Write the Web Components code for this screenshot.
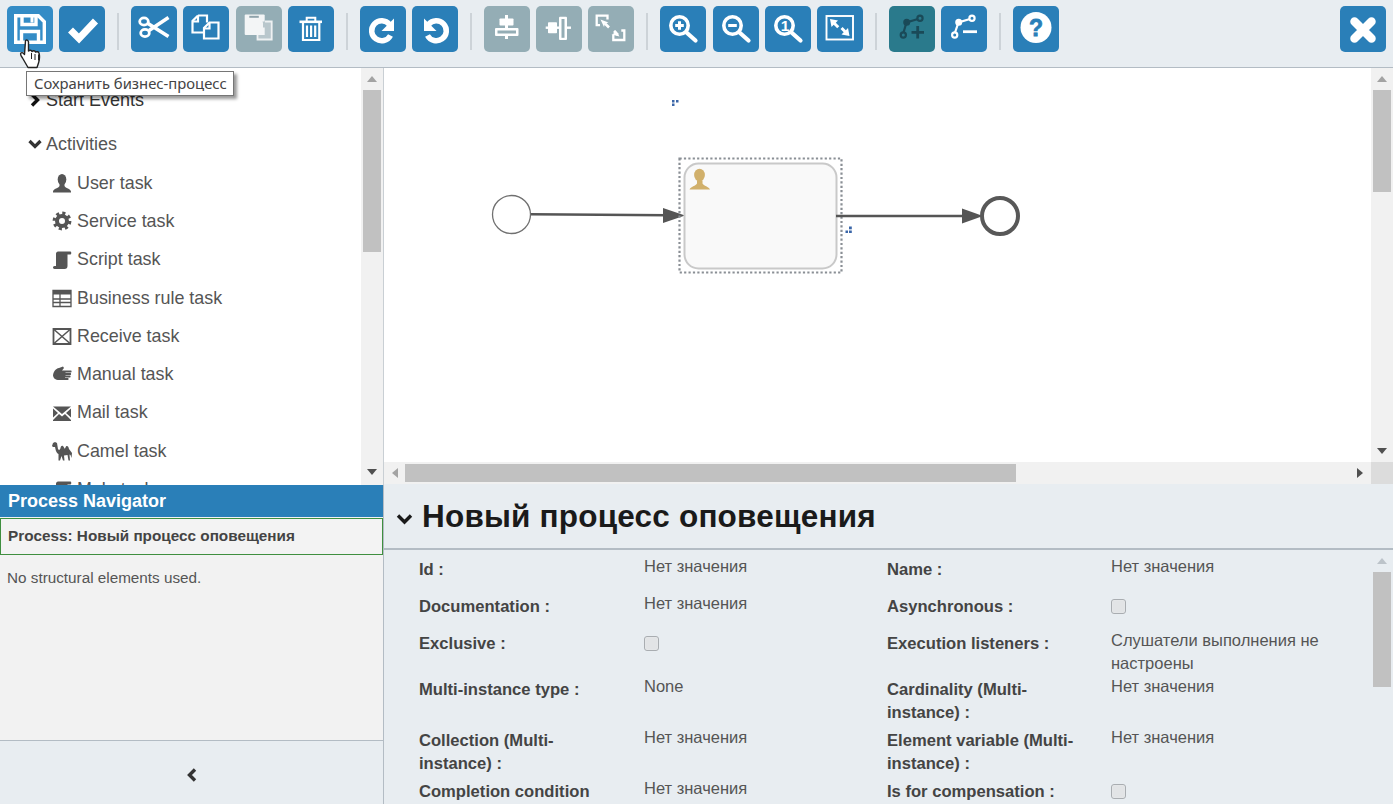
<!DOCTYPE html>
<html lang="ru"><head><meta charset="utf-8"><title>Process editor</title>
<style>
html,body{margin:0;padding:0;background:#fff;font-family:"Liberation Sans",Arial,sans-serif;overflow:hidden}
</style></head><body>
<app-shell>
  <app-toolbar slot="top">
    <tool-btn icon="save" tone="hover"></tool-btn><tool-btn icon="check"></tool-btn><tool-sep></tool-sep>
    <tool-btn icon="cut"></tool-btn><tool-btn icon="copy"></tool-btn><tool-btn icon="paste" tone="off"></tool-btn><tool-btn icon="trash"></tool-btn><tool-sep></tool-sep>
    <tool-btn icon="redo"></tool-btn><tool-btn icon="undo"></tool-btn><tool-sep></tool-sep>
    <tool-btn icon="alignh" tone="off"></tool-btn><tool-btn icon="alignv" tone="off"></tool-btn><tool-btn icon="samesize" tone="off"></tool-btn><tool-sep></tool-sep>
    <tool-btn icon="zoomin"></tool-btn><tool-btn icon="zoomout"></tool-btn><tool-btn icon="zoom1"></tool-btn><tool-btn icon="fit"></tool-btn><tool-sep></tool-sep>
    <tool-btn icon="addpt" tone="active"></tool-btn><tool-btn icon="rempt"></tool-btn><tool-sep></tool-sep>
    <tool-btn icon="help"></tool-btn>
    <tool-btn icon="close" class="end"></tool-btn>
  </app-toolbar>
  <shape-palette slot="left">
    <palette-group>Start Events</palette-group>
    <palette-group open>Activities</palette-group>
    <palette-item icon="user">User task</palette-item>
    <palette-item icon="gear">Service task</palette-item>
    <palette-item icon="script">Script task</palette-item>
    <palette-item icon="table">Business rule task</palette-item>
    <palette-item icon="receive">Receive task</palette-item>
    <palette-item icon="hand">Manual task</palette-item>
    <palette-item icon="mail">Mail task</palette-item>
    <palette-item icon="camel">Camel task</palette-item>
    <palette-item icon="script">Mule task</palette-item>
  </shape-palette>
  <process-navigator slot="left"></process-navigator>
  <process-canvas slot="right"></process-canvas>
  <property-panel slot="right" heading="Новый процесс оповещения">
    <prop-label>Id :</prop-label><prop-value>Нет значения</prop-value><prop-label>Name :</prop-label><prop-value>Нет значения</prop-value>
    <prop-label>Documentation :</prop-label><prop-value>Нет значения</prop-value><prop-label>Asynchronous :</prop-label><prop-check></prop-check>
    <prop-label>Exclusive :</prop-label><prop-check></prop-check><prop-label>Execution listeners :</prop-label><prop-value>Слушатели выполнения не настроены</prop-value>
    <prop-label>Multi-instance type :</prop-label><prop-value>None</prop-value><prop-label>Cardinality (Multi-instance) :</prop-label><prop-value>Нет значения</prop-value>
    <prop-label>Collection (Multi-instance) :</prop-label><prop-value>Нет значения</prop-value><prop-label>Element variable (Multi-instance) :</prop-label><prop-value>Нет значения</prop-value>
    <prop-label>Completion condition</prop-label><prop-value>Нет значения</prop-value><prop-label>Is for compensation :</prop-label><prop-check></prop-check>
  </property-panel>
  <hover-tip slot="over" text="Сохранить бизнес-процесс"></hover-tip>
</app-shell>
<script>
const OFF='#94adb5';
const TOOL_ICONS={
save:'<g fill="none" stroke="#fff" stroke-width="3.4"><path d="M8.7 9.7h22.6l6 6v20.6H8.7z"/><path d="M15 10v8.5h14V10"/><path d="M14.5 36V25.5h17V36"/></g><rect x="23.5" y="11" width="3" height="5.5" fill="#fff"/>',
check:'<path d="M11.5 24l8.500 8.500L36.500 15" fill="none" stroke="#fff" stroke-width="7"/>',
cut:'<g fill="none" stroke="#fff"><ellipse cx="13" cy="15.500" rx="4.300" ry="3.600" stroke-width="2.800"/><ellipse cx="14" cy="27" rx="4.300" ry="3.600" stroke-width="2.800"/><path d="M17 17.500L37.500 30.500M18 24.500L37.500 11.500" stroke-width="3.600"/></g>',
copy:'<g fill="none" stroke="#fff" stroke-width="2.200"><path d="M15 9.500h9v7M15 9.500l-5.500 5.500v11.500H20"/><path d="M15 10v5.500H10"/><path d="M26.500 16.500h9v16H21V22z"/><path d="M26.500 17v5.500H21.500"/></g>',
paste:'<rect x="8.700" y="8.500" width="20" height="20.500" rx="1" fill="#f3f5f6"/><rect x="13.300" y="9.800" width="9.500" height="2" fill="#8fa3ab"/><path d="M26.500 15.500h9.200v18H21.500V29H27V17z" fill="#b9c7cc"/><path d="M29 15.500h6.700v18H21.500V29" fill="none" stroke="#eef1f2" stroke-width="1.800"/><path d="M26.500 21.500h2.200V29H21.500v-2.500z" fill="#f3f5f6"/>',
trash:'<g fill="none" stroke="#fff"><path d="M11.500 15.800h22.500" stroke-width="2.600"/><path d="M18.700 15v-3.300h8.600V15" stroke-width="2"/><path d="M15 17v17h16.300V17" stroke-width="2.200"/><path d="M19 19.500V31M23.100 19.500V31M27.200 19.500V31" stroke-width="2.200"/></g>',
redo:'<path d="M29.500 18.500a10 10 0 1 0 1 11" fill="none" stroke="#fff" stroke-width="5.500"/><path d="M34 12.500V25H21.500z" fill="#fff"/>',
undo:'<path d="M16.500 18.500a10 10 0 1 1 -1 11" fill="none" stroke="#fff" stroke-width="5.500"/><path d="M12 12.500V25h12.500z" fill="#fff"/>',
alignh:'<g fill="#fff"><rect x="15.500" y="12.500" width="14" height="7" rx=".8"/><rect x="21" y="9" width="3" height="24"/><rect x="11" y="22" width="23.500" height="8" rx="1"/></g><rect x="13.500" y="24.500" width="18.500" height="3" fill="#94adb5"/>',
alignv:'<g fill="#fff"><rect x="12" y="16.300" width="9" height="11" rx=".8"/><rect x="9.700" y="20.500" width="25.300" height="2.400"/><rect x="23" y="10.700" width="8" height="23.300" rx="1"/></g><rect x="25.500" y="13" width="3" height="18.800" fill="#94adb5"/>',
samesize:'<g fill="none" stroke="#fff" stroke-width="2.300"><path d="M19.500 13.500V9.700H8.700v9.500h3.300"/><path d="M25.300 29v5h11V24.500h-3"/><path d="M17 17.500l4 4M26 25l4 4" stroke-width="2.600"/></g><path d="M12.500 13.500l8 3-3.500 1-1 3.500zM31.500 30.500l-8-2 3-1.500 1-3z" fill="#fff"/>',
zoomin:'<g fill="none" stroke="#fff"><circle cx="19.500" cy="19.500" r="8.700" stroke-width="3.600"/><path d="M26.500 26.500L35.500 34.500" stroke-width="4.200" stroke-linecap="round"/><path d="M15.200 19.500h8.600M19.500 15.200v8.600" stroke-width="3"/></g>',
zoomout:'<g fill="none" stroke="#fff"><circle cx="19.500" cy="19.500" r="8.700" stroke-width="3.600"/><path d="M26.500 26.500L35.500 34.500" stroke-width="4.200" stroke-linecap="round"/><path d="M15.200 19.500h8.600" stroke-width="3"/></g>',
zoom1:'<g fill="none" stroke="#fff"><circle cx="19.500" cy="19.500" r="8.700" stroke-width="3.600"/><path d="M26.500 26.500L35.500 34.500" stroke-width="4.200" stroke-linecap="round"/></g><text x="20" y="25" text-anchor="middle" font-family="Liberation Sans" font-weight="700" font-size="15.500" fill="#fff">1</text>',
fit:'<rect x="9.500" y="10" width="26.500" height="23.500" fill="none" stroke="#fff" stroke-width="1.900"/><g fill="#fff"><path d="M13 13l8 1.500-2.200 2.200 3.500 3.500-2.100 2-3.500-3.500L14.500 21z"/><path d="M32.500 30l-8-1.500 2.200-2.200-3.200-3.200 2.100-2 3.200 3.200L31 22z"/></g>',
addpt:'<g fill="none" stroke="#1a4a58" stroke-width="2.200"><path d="M14.500 26.500L17.500 16.500 29 13"/><circle cx="14.300" cy="29" r="2.600"/><circle cx="17.700" cy="16.300" r="2.400" fill="#1a4a58"/><circle cx="31" cy="12.300" r="2.600"/><path d="M22.500 26.300h12.500M28.700 20v12.500" stroke-width="2.800"/></g>',
rempt:'<g fill="none" stroke="#fff" stroke-width="2.200"><path d="M14 26.500L17.500 16.500 29 13"/><circle cx="13.700" cy="29" r="2.600"/><circle cx="17.700" cy="16.300" r="2.400" fill="#fff"/><circle cx="31" cy="12.300" r="2.600"/><path d="M22 25.700h14" stroke-width="2.800"/></g>',
help:'<circle cx="23" cy="21.500" r="15.500" fill="#fff"/><text x="23" y="29.500" text-anchor="middle" font-family="Liberation Sans" font-weight="700" font-size="23" fill="#2a7fb8" stroke="#2a7fb8" stroke-width=".8">?</text>',
close:'<path d="M14.500 15.500l17 17M31.500 15.500l-17 17" fill="none" stroke="#fff" stroke-width="8.500" stroke-linecap="round"/>'
};
const PAL_ICONS={
user:'<ellipse cx="10" cy="6.500" rx="4.300" ry="5.500"/><path d="M1 19.500v-1c.5-3 5.500-3 6.500-5.500V11h5v2c1 2.500 6 2.500 6.500 5.500v1z"/>',
gear:'<circle cx="10" cy="10" r="5" fill="none" stroke="#555" stroke-width="4"/><circle cx="10" cy="10" r="7.800" fill="none" stroke="#555" stroke-width="3.200" stroke-dasharray="3.100 3.030"/>',
script:'<path d="M6 1.500h12.500c1 0 1 3 0 3h-3V16c0 2-1 3-3 3h-10c-2 0-2-3 0-3H4V3.500c0-1 1-2 2-2z"/>',
table:'<path d="M1 2.500h18v16H1z" fill="none" stroke="#555" stroke-width="1.300"/><path d="M1 2.500h18v4H1z"/><path d="M1 11h18M1 14.500h18M8 6v12.500" stroke="#555" stroke-width="1.300" fill="none"/>',
receive:'<path d="M1.500 3h17v15h-17z" fill="none" stroke="#555" stroke-width="1.800"/><path d="M2 3.500l16 14M18 3.500l-16 14" fill="none" stroke="#555" stroke-width="1.500"/>',
hand:'<path d="M1 11.500C1 7 3.500 3.500 7 3l4-1.500 1 1.500-2 2.500h9c.8 0 .8 2 0 2h-5.500v.5h5c.8 0 .8 2 0 2h-5v.5h4.500c.8 0 .8 2 0 2H13v.5h3c.8 0 .8 2 0 2H7c-3.500 0-6-2-6-5z"/>',
mail:'<path d="M1 3.500h18L10 11zM1 5.500l5 4.500-5 4.500zM19 5.500L14 10l5 4.500zM7 11l3 2.500 3-2.500 6 6v1H1v-1z"/>',
camel:'<path d="M0 5l1-3 2-1 2 1 1 6c1 1.500 2 1 2.500-1 .5-3 2.500-3 3.500-.5.500 1.500 1 1.500 1.500 0 1-2.500 3-1.500 3.500 1.500l3 4-.5 5-1-3-1-.5.500 6h-1.500l-1-5.500-3.500.5.500 5H11l-1.500-4.500L8 19.500H6.500V13C4 12 3.500 8 3 6L1 6z"/>'
};
function def(name,css,html){
  customElements.define(name,class extends HTMLElement{
    connectedCallback(){
      if(this.shadowRoot)return;
      const r=this.attachShadow({mode:'open'});
      r.innerHTML='<style>'+css+'</style>'+(typeof html==='function'?html(this):html);
    }
  });
}
def('app-shell',`
:host{display:grid;grid-template-columns:384px 1009px;grid-template-rows:68px 736px;width:1393px;height:804px;position:relative;background:#e8edf1;color:#555}
.top{grid-column:1/3;display:block}
.col{display:flex;flex-direction:column;min-height:0;overflow:hidden}
`,`<div class="top"><slot name="top"></slot></div><div class="col"><slot name="left"></slot></div><div class="col"><slot name="right"></slot></div><slot name="over"></slot>`);
def('app-toolbar',`
:host{display:flex;align-items:flex-start;gap:6.33px;padding:6px 7px 0;box-sizing:border-box;height:68px;border-bottom:1px solid #b3bcc4;background:#e8edf1}
`,`<slot></slot>`);
def('tool-sep',`:host{display:block;width:2px;height:37px;margin:7px 5.54px 0;background:#cdd3d8}`,``);
def('tool-btn',`
:host{display:block;width:46px;height:46px;flex:none;border-radius:5px;background:#2a7fb8}
:host([tone=off]){background:#94adb5}
:host([tone=active]){background:#2a7a8c}
:host([tone=hover]){background:#348cc6}
:host(.end){margin-left:auto}
svg{display:block;width:46px;height:46px}
`,el=>`<svg viewBox="0 0 46 46" aria-hidden="true">${TOOL_ICONS[el.getAttribute('icon')]}</svg>`);
def('v-bar',`
:host{display:flex;flex:none;flex-direction:column;align-items:center;width:22px;box-sizing:border-box;background:var(--track,#f1f1f1)}
.a{flex:none;height:22px;display:flex;align-items:center;justify-content:center}
.t{flex:none;width:18px;background:#c1c1c1}
.e{flex:1}
i{display:block;width:0;height:0;border-left:5px solid transparent;border-right:5px solid transparent}
.u i{border-bottom:6px solid var(--arrow,#a3a3a3)}
.d i{border-top:6px solid #505050}
`,el=>`<div class="a u"><i></i></div><div class="t" style="height:${el.getAttribute('thumb')}px"></div><div class="e"></div>${el.hasAttribute('nodown')?'':'<div class="a d"><i></i></div>'}<div style="height:${el.getAttribute('pad')||0}px;flex:none"></div>`);
def('h-bar',`
:host{display:flex;align-items:center;height:22px;flex:1;background:#f1f1f1}
.a{flex:none;width:21px;display:flex;justify-content:center}
.t{flex:none;width:611px;height:18px;background:#c1c1c1}
.e{flex:1}
i{display:block;width:0;height:0;border-top:5px solid transparent;border-bottom:5px solid transparent}
.l i{border-right:6px solid #a3a3a3}
.r i{border-left:6px solid #505050}
.r{width:22px}
`,`<div class="a l"><i></i></div><div class="t"></div><div class="e"></div><div class="a r"><i></i></div>`);
def('shape-palette',`
:host{display:flex;flex:none;height:417px;background:#fff;border-right:1px solid #c9cfd4;box-sizing:border-box;width:384px}
.list{flex:1;min-width:0;overflow:hidden;padding-top:13px;box-sizing:border-box}
`,`<div class="list"><slot></slot></div><v-bar thumb="162" pad="2"></v-bar>`);
def('palette-group',`
:host{display:flex;align-items:center;height:38px;padding-left:28px;font-size:18px;margin-bottom:6px;color:#333}
:host([open]){margin-bottom:1px;color:#555}
svg{flex:none;width:14px;height:14px;margin-right:4px}
`,el=>`<svg viewBox="0 0 14 14">${el.hasAttribute('open')?'<path d="M1.500 4l5.500 5.500L12.500 4" fill="none" stroke="#333" stroke-width="3.200"/>':'<path d="M4 1.500L9.500 7 4 12.500" fill="none" stroke="#111" stroke-width="3.400"/>'}</svg><slot></slot>`);
def('palette-item',`
:host{display:flex;align-items:center;height:38.3px;padding-left:52px;font-size:17.900px;color:#555}
svg{flex:none;width:20px;height:20px;margin-right:5px;fill:#555}
`,el=>`<svg viewBox="0 0 20 20">${PAL_ICONS[el.getAttribute('icon')]}</svg><slot></slot>`);
def('process-navigator',`
:host{display:flex;flex-direction:column;flex:1;min-height:0;background:#f2f2f2;border-right:1px solid #b3bcc4;box-sizing:border-box;width:384px}
h2{margin:0;height:32px;line-height:32px;padding-left:8px;background:#2a7fb8;color:#fff;font-size:18px;font-weight:700}
.proc{height:37px;line-height:33px;margin-top:1px;box-sizing:border-box;border:1.500px solid #3f8f3f;padding-left:7px;font-size:15.300px;font-weight:700;color:#444;background:#f3f3f3}
p{margin:0;padding:14px 0 0 7px;font-size:15.270px;color:#555;flex:1}
.foot{flex:none;height:64px;border-top:1px solid #b3bcc4;background:#e8edf1;display:flex;align-items:center;justify-content:center;box-sizing:border-box}
svg{width:12px;height:16px;display:block;margin-top:4px}
`,`<h2>Process Navigator</h2><div class="proc">Process: Новый процесс оповещения</div><p>No structural elements used.</p><div class="foot"><svg viewBox="0 0 12 16"><path d="M9 2.500L3.500 8 9 13.500" fill="none" stroke="#333" stroke-width="3.400"/></svg></div>`);
def('process-canvas',`
:host{display:grid;grid-template-columns:987px 22px;grid-template-rows:394px 22px;flex:none;height:416px;background:#fff}
svg{display:block;width:987px;height:394px}
.c{background:#dcdcdc}
.h{display:flex}
`,`<svg viewBox="384 68 987 394">
<path d="M531 214.300L668 215.300" stroke="#555" stroke-width="2.600" fill="none"/>
<path d="M663 208l22 7.500-22 7.500z" fill="#555"/>
<circle cx="511.500" cy="214.500" r="19" fill="#fff" stroke="#707070" stroke-width="1.300"/>
<rect x="679.500" y="158.500" width="162" height="114" fill="none" stroke="#8a8f95" stroke-width="2.200" stroke-dasharray="2.200 2.200"/>
<rect x="684.500" y="163.500" width="152" height="105" rx="14" fill="#f9f9f9" stroke="#c9c9c9" stroke-width="2"/>
<path d="M836 216H966" stroke="#555" stroke-width="2.600" fill="none"/>
<path d="M962 208.500l21 7.500-21 7.500z" fill="#555"/>
<circle cx="1000" cy="216" r="18" fill="#fff" stroke="#585858" stroke-width="4"/>
<g fill="#d1b06b"><ellipse cx="699.500" cy="175" rx="5.400" ry="6.300"/><path d="M689.500 189.500c1-3 6.500-3.500 7.500-6v-3h5.500v3c1 2.500 6.500 3 7.500 6z"/></g>
<g fill="#3b66a8"><rect x="672" y="100" width="2.500" height="2.500"/><rect x="676" y="100" width="2.500" height="2.500"/><rect x="672" y="103.500" width="2.500" height="2.500"/>
<rect x="849" y="226.500" width="2.800" height="2.800"/><rect x="845.500" y="230.500" width="2.500" height="2.500"/><rect x="849" y="230.500" width="2.800" height="2.500"/></g>
</svg><v-bar thumb="102"></v-bar><div class="h"><h-bar></h-bar></div><div class="c"></div>`);
def('property-panel',`
:host{display:flex;flex-direction:column;flex:1;min-height:0;background:#e8edf1}
header{flex:none;display:flex;align-items:center;height:66px;box-sizing:border-box;border-bottom:2px solid #b3bcc4;padding:1px 0 0 12px}
header svg{width:17px;height:14px;margin-right:9px;margin-top:5px}
h1{margin:0;font-size:31.500px;font-weight:700;color:#1a1a1a;letter-spacing:.2px}
.b{flex:1;display:flex;min-height:0}
.g{flex:1;min-width:0;overflow:hidden;display:grid;grid-template-columns:225px 243px 224px 1fr;grid-template-rows:37px 37px 46px 51px 51px 37px;padding:8px 0 0 35px;box-sizing:border-box;align-content:start}
v-bar{--track:transparent;--arrow:#bcc3c9}
`,el=>`<header><svg viewBox="0 0 17 14"><path d="M2 3.500l6.500 6.500L15 3.500" fill="none" stroke="#1a1a1a" stroke-width="3.400"/></svg><h1>${el.getAttribute('heading')}</h1></header><div class="b"><div class="g"><slot></slot></div><v-bar thumb="115" nodown></v-bar></div>`);
def('prop-label',`:host{display:block;font-size:16.600px;font-weight:700;line-height:23px;color:#444;padding-right:24px}`,`<slot></slot>`);
def('prop-value',`:host{display:block;font-size:16.500px;line-height:23px;color:#555;margin-top:-3px;padding-right:6px}`,`<slot></slot>`);
def('prop-check',`:host{display:block;width:15px;height:15px;margin-top:4px;box-sizing:border-box;border:1px solid #a9adb1;border-radius:3px;background:#e2e4e6;box-shadow:inset 0 0 1px #fff}`,``);
def('hover-tip',`
:host{display:block;position:absolute;left:0;top:0;width:0;height:0}
.t{position:absolute;left:26px;top:71px;box-sizing:border-box;width:208px;height:25px;padding-left:7px;background:#fff;border:1px solid #767676;box-shadow:3px 3px 3px rgba(0,0,0,.4);font:14.800px/23px "Noto Sans","Liberation Sans",sans-serif;color:#444;white-space:nowrap}
svg{position:absolute;left:19px;top:38px;width:24px;height:32px}
`,el=>`<div class="t">${el.getAttribute('text')}</div><svg viewBox="0 0 24 32"><path d="M6.500 2.500c1.500-1 3 0 3 1.500v9c1-1 3-1 3.500.5 1-1 3-1 3.500.5 1-.5 3-.5 3.500 1 .8 3 .5 7-.5 10l-1.500 4.500H9L3.500 20C2 18 1 16 2 15c1-1 2.500 0 3.500 1.500z" fill="#fff" stroke="#222" stroke-width="1.400" stroke-linejoin="round"/><path d="M12.500 15v6M16 16v6M19.500 16.500v6" stroke="#222" stroke-width="1"/></svg>`);
</script>
</body></html>
